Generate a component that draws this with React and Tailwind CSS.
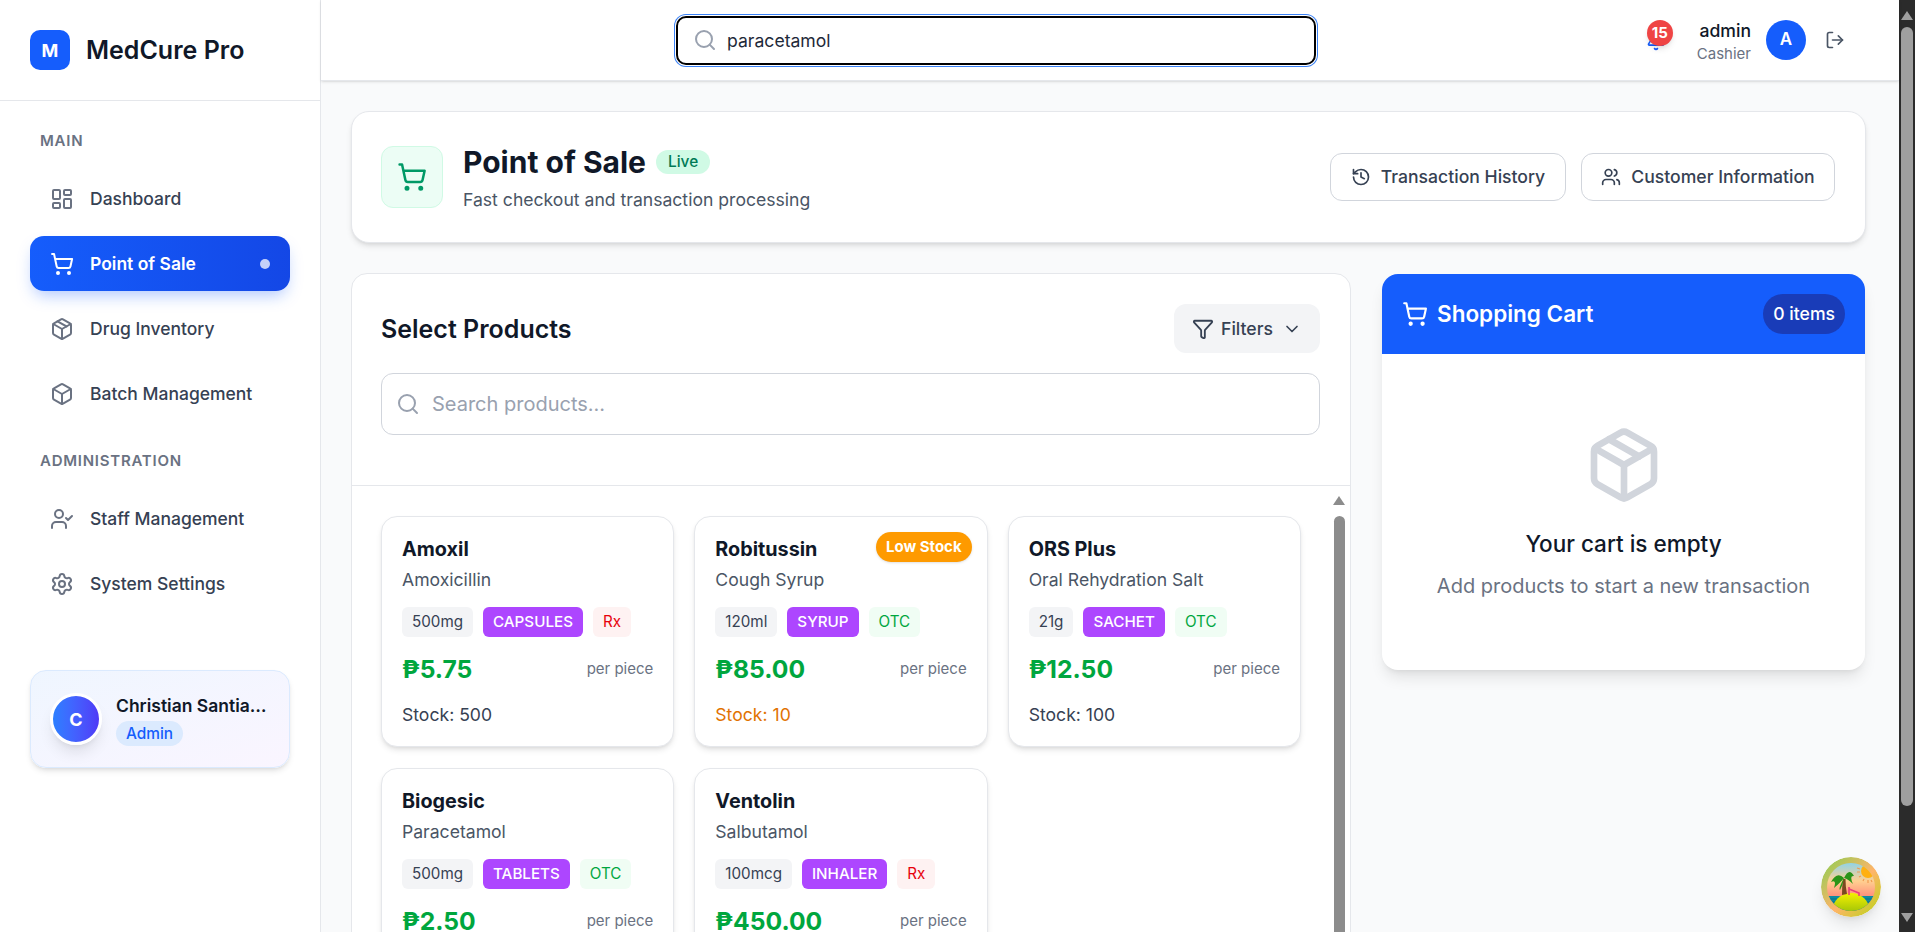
import React from 'react';
import {
    LayoutDashboard,
    ShoppingCart,
    Package,
    Box,
    UserCheck,
    Settings,
    Search,
    Bell,
    LogOut,
    History,
    Users,
    Filter,
    ChevronDown,
} from 'lucide-react';

const products = [
    { name: 'Amoxil', generic: 'Amoxicillin', dose: '500mg', form: 'CAPSULES', rx: true, price: '₱5.75', stock: 500 },
    { name: 'Robitussin', generic: 'Cough Syrup', dose: '120ml', form: 'SYRUP', rx: false, price: '₱85.00', stock: 10, low: true },
    { name: 'ORS Plus', generic: 'Oral Rehydration Salt', dose: '21g', form: 'SACHET', rx: false, price: '₱12.50', stock: 100 },
    { name: 'Biogesic', generic: 'Paracetamol', dose: '500mg', form: 'TABLETS', rx: false, price: '₱2.50', stock: 200 },
    { name: 'Ventolin', generic: 'Salbutamol', dose: '100mcg', form: 'INHALER', rx: true, price: '₱450.00', stock: 50 },
];

const NavItem = ({ icon: Icon, label, active }) => (
    <div
        className={`flex items-center h-[55px] pl-[20px] pr-[20px] rounded-[14px] text-[17.5px] ${active
            ? 'bg-gradient-to-r from-blue-600 to-blue-700 text-white font-semibold shadow-[0_8px_16px_-4px_rgba(21,93,252,0.35)]'
            : 'text-gray-700 font-medium'
            }`}
    >
        <Icon size={24} strokeWidth={2} className={active ? 'text-white' : 'text-gray-500'} />
        <span className="ml-[16px] pt-[2px]">{label}</span>
        {active && <span className="ml-auto w-[10px] h-[10px] rounded-full bg-white/75" />}
    </div>
);

const Sidebar = () => (
    <aside className="w-[321px] shrink-0 bg-white border-r border-gray-200 flex flex-col">
        <div className="h-[101px] shrink-0 border-b border-gray-200 flex items-center pl-[30px]">
            <div className="w-[40px] h-[40px] rounded-[10px] bg-blue-600 flex items-center justify-center text-white font-bold text-[18px]">
                M
            </div>
            <span className="ml-[16px] pt-[2px] text-[25px] font-semibold text-gray-900">MedCure Pro</span>
        </div>
        <div className="px-[30px] pt-[30px]">
            <div className="pl-[10px] text-[15px] leading-[20px] font-semibold tracking-wider text-gray-500">MAIN</div>
            <div className="mt-[20px] flex flex-col gap-[10px]">
                <NavItem icon={LayoutDashboard} label="Dashboard" />
                <NavItem icon={ShoppingCart} label="Point of Sale" active />
                <NavItem icon={Package} label="Drug Inventory" />
                <NavItem icon={Box} label="Batch Management" />
            </div>
            <div className="pl-[10px] mt-[30px] text-[15px] leading-[20px] font-semibold tracking-wider text-gray-500">ADMINISTRATION</div>
            <div className="mt-[20px] flex flex-col gap-[10px]">
                <NavItem icon={UserCheck} label="Staff Management" />
                <NavItem icon={Settings} label="System Settings" />
            </div>
            <div className="mt-[59px] h-[98px] rounded-[16px] border border-blue-100 bg-gradient-to-br from-blue-50 to-purple-50 shadow-md flex items-center pl-[19px] pr-[20px]">
                <div className="w-[52px] h-[52px] shrink-0 rounded-full border-[3px] border-white bg-gradient-to-r from-blue-500 to-indigo-600 shadow-lg flex items-center justify-center text-white font-bold text-[18px]">
                    C
                </div>
                <div className="ml-[14px] min-w-0">
                    <div className="truncate text-[17.5px] leading-[26px] font-semibold text-gray-900">Christian Santiago</div>
                    <span className="inline-block mt-[2px] px-[10px] rounded-full bg-blue-100 text-blue-600 text-[15.4px] leading-[25px] font-medium">Admin</span>
                </div>
            </div>
        </div>
    </aside>
);

const TopBar = () => (
    <header className="h-[81px] shrink-0 bg-white border-b border-gray-200 shadow-sm flex items-center pr-[54px]">
        <div className="ml-[355px] w-[640px] h-[49px] rounded-[10px] border-2 border-black bg-white shadow-[0_0_0_1px_#fff,0_0_0_2px_#3b82f6] flex items-center pl-[15px]">
            <Search size={24} className="text-gray-400" />
            <input readOnly value="paracetamol" className="ml-[10px] pt-[2px] flex-1 outline-none bg-transparent text-[17.6px] text-gray-800" style={{ fontFamily: 'inherit' }} />
        </div>
        <div className="ml-auto flex items-center">
            <div className="relative w-[20px] h-[20px] mt-[2px]">
                <Bell size={20} className="text-blue-600" />
                <span className="absolute -top-[11px] left-[1px] w-[26px] h-[26px] rounded-full bg-[#ef4444] shadow-md text-white text-[15px] font-bold flex items-center justify-center">15</span>
            </div>
            <div className="ml-[31px] pt-[2px] text-right">
                <div className="text-[17.6px] leading-[26px] font-medium text-gray-900">admin</div>
                <div className="text-[15px] leading-[20px] text-gray-500">Cashier</div>
            </div>
            <div className="ml-[15px] w-[40px] h-[40px] rounded-full bg-blue-600 flex items-center justify-center text-white font-semibold text-[17px]">A</div>
            <LogOut size={20} className="ml-[19px] text-gray-600" />
        </div>
    </header>
);

const Tag = ({ className, children }) => (
    <span className={`h-[30px] px-[10px] rounded-[6px] flex items-center text-[15.2px] ${className}`}>{children}</span>
);

const ProductCard = ({ product }) => (
    <div className="relative h-[231px] rounded-[16px] border border-gray-200 bg-white shadow-md pt-[18px] px-[20px]">
        {product.low && (
            <span className="absolute top-[15px] right-[15px] h-[30px] px-[10px] rounded-full bg-amber-500 shadow-sm text-white text-[15px] font-bold flex items-center">Low Stock</span>
        )}
        <div className="text-[19.8px] leading-[28px] font-bold text-gray-900">{product.name}</div>
        <div className="mt-[4px] pt-[1px] text-[17.6px] leading-[24px] text-gray-600">{product.generic}</div>
        <div className="mt-[15px] flex gap-[10px]">
            <Tag className="bg-gray-100 text-gray-700">{product.dose}</Tag>
            <Tag className="bg-purple-500 text-white font-medium">{product.form}</Tag>
            {product.rx
                ? <Tag className="bg-red-50 text-red-600">Rx</Tag>
                : <Tag className="bg-green-50 text-green-600">OTC</Tag>}
        </div>
        <div className="mt-[14px] flex items-center justify-between">
            <span className="text-[24.7px] leading-[36px] font-bold text-green-600">{product.price}</span>
            <span className="text-[15px] text-gray-500">per piece</span>
        </div>
        <div className={`mt-[16px] text-[17.6px] leading-[24px] ${product.low ? 'text-amber-600' : 'text-gray-700'}`}>
            Stock: {product.stock}
        </div>
    </div>
);

const ProductPanel = () => (
    <section className="rounded-t-[16px] border border-gray-200 bg-white flex flex-col h-[700px]">
        <div className="h-[212px] shrink-0 border-b border-gray-200 pl-[29px] pr-[30px] pt-[30px]">
            <div className="flex items-center justify-between">
                <h2 className="pt-[2px] text-[25px] font-semibold text-gray-900">Select Products</h2>
                <button className="w-[146px] h-[49px] rounded-[12px] bg-gray-100 flex items-center justify-center text-[17.6px] font-medium text-gray-700">
                    <Filter size={22} />
                    <span className="ml-[7px] pt-[2px]">Filters</span>
                    <ChevronDown size={20} className="ml-[9px]" />
                </button>
            </div>
            <div className="mt-[20px] h-[62px] rounded-[12px] border border-gray-300 flex items-center pl-[14px]">
                <Search size={24} className="text-gray-400" />
                <span className="ml-[12px] text-[20px] text-gray-400">Search products...</span>
            </div>
        </div>
        <div className="flex-1 flex min-h-0">
            <div className="flex-1 pl-[29px] pr-[30px] pt-[30px]">
                <div className="grid grid-cols-3 gap-x-[20px] gap-y-[21px]">
                    {products.map((p) => <ProductCard key={p.name} product={p} />)}
                </div>
            </div>
            {/* inner scrollbar */}
            <div className="w-[19px] shrink-0 flex flex-col items-center pt-[10px] pr-[3px]">
                <div className="w-0 h-0 border-x-[6px] border-x-transparent border-b-[9px] border-b-[#8c8c8c]" />
                <div className="mt-[11px] w-[11px] flex-1 rounded-full bg-[#8c8c8c]" />
            </div>
        </div>
    </section>
);

const CartPanel = () => (
    <section className="mt-[1px] rounded-[16px] bg-white shadow-lg h-[396px] overflow-hidden">
        <div className="h-[80px] bg-blue-600 flex items-center justify-between pl-[20px] pr-[20px] text-white">
            <div className="flex items-center">
                <ShoppingCart size={26} />
                <span className="ml-[9px] text-[22.5px] font-semibold">Shopping Cart</span>
            </div>
            <span className="h-[40px] px-[10px] rounded-full bg-blue-800 flex items-center text-[17.6px] font-medium">0 items</span>
        </div>
        <div className="flex flex-col items-center pt-[71px]">
            <Package size={80} className="text-gray-300" />
            <div className="mt-[24px] text-[22.5px] leading-[30px] font-medium text-gray-900">Your cart is empty</div>
            <div className="mt-[13px] text-[20px] leading-[28px] text-gray-500">Add products to start a new transaction</div>
        </div>
    </section>
);

const BeachBadge = () => (
    <svg viewBox="0 0 60 60" className="absolute right-[18px] bottom-[15px] w-[60px] h-[60px] rounded-full shadow-lg">
        <defs>
            <linearGradient id="ring" x1="0" y1="0" x2="1" y2="1">
                <stop offset="0" stopColor="#86d052" />
                <stop offset="0.55" stopColor="#ffb46a" />
                <stop offset="1" stopColor="#b4d810" />
            </linearGradient>
            <linearGradient id="sky" x1="0" y1="0" x2="0" y2="1">
                <stop offset="0.05" stopColor="#7fd4f5" />
                <stop offset="0.4" stopColor="#ffd090" />
                <stop offset="0.7" stopColor="#ff8478" />
            </linearGradient>
            <linearGradient id="isle" x1="0" y1="0" x2="0" y2="1">
                <stop offset="0" stopColor="#f5f000" />
                <stop offset="1" stopColor="#4f9a10" />
            </linearGradient>
            <clipPath id="inner"><circle cx="30" cy="30" r="24" /></clipPath>
        </defs>
        <circle cx="30" cy="30" r="30" fill="url(#ring)" />
        <g clipPath="url(#inner)">
            <rect width="60" height="60" fill="url(#sky)" />
            <circle cx="47" cy="14" r="7" fill="#ffb010" />
            <path d="M36 11l3 1M36 15l3 0M38 20l2-1M42 24l1-2M47 26l0-3M51 25l-1-2" stroke="#f09a50" strokeWidth="1.2" />
            <rect y="39" width="60" height="21" fill="#0f8aa0" />
            <path d="M0 42h60M0 45h60" stroke="#0b5f78" strokeWidth="0.6" />
            <ellipse cx="30" cy="55" rx="19" ry="19" fill="url(#isle)" />
            <path d="M21 38Q21 29 22 22L24.5 22Q24.5 30 26 37Z" fill="#7a4a20" />
            <path d="M23 21Q16 14 10 25Q16 22 13 31Q20 25 23 21ZM23 21Q17 32 19 33Q22 28 23 21ZM23 21Q28 10 33 19Q28 18 32 27Q27 22 23 21Z" fill="#2a9418" />
            <path d="M28 30v8M28 32l10 4v3" stroke="#e8407a" strokeWidth="1.6" fill="none" />
        </g>
    </svg>
);

const App = () => (
    <div className="relative h-screen flex overflow-hidden bg-white" style={{ fontFamily: 'Inter, "Noto Sans", sans-serif' }}>
        <Sidebar />
        <main className="relative flex-1 min-w-0 flex flex-col bg-gray-50">
            <TopBar />
            <div className="pl-[30px] pr-[33px] pt-[30px]">
                <div className="h-[132px] rounded-[18px] border border-gray-200 bg-white shadow-md flex items-center pl-[29px] pr-[30px]">
                    <div className="w-[62px] h-[62px] rounded-[12px] border border-emerald-100 bg-emerald-50 flex items-center justify-center">
                        <ShoppingCart size={30} className="text-emerald-600" />
                    </div>
                    <div className="ml-[20px] pt-[2px]">
                        <div className="flex items-center">
                            <h1 className="text-[30px] leading-[36px] font-bold text-gray-900">Point of Sale</h1>
                            <span className="ml-[10px] h-[24px] px-[12px] rounded-full bg-emerald-100 text-emerald-700 text-[15.4px] font-medium flex items-center">Live</span>
                        </div>
                        <p className="mt-[8px] text-[17.6px] leading-[24px] text-gray-600">Fast checkout and transaction processing</p>
                    </div>
                    <div className="ml-auto flex gap-[15px]">
                        <button className="h-[48px] w-[236px] rounded-[12px] border border-gray-300 flex items-center justify-center text-[17.6px] font-medium text-gray-700">
                            <History size={20} />
                            <span className="ml-[10px]">Transaction History</span>
                        </button>
                        <button className="h-[48px] w-[254px] rounded-[12px] border border-gray-300 flex items-center justify-center text-[17.6px] font-medium text-gray-700">
                            <Users size={20} />
                            <span className="ml-[10px]">Customer Information</span>
                        </button>
                    </div>
                </div>
                <div className="mt-[30px] grid grid-cols-[1000px_483px] gap-x-[31px] items-start">
                    <ProductPanel />
                    <CartPanel />
                </div>
            </div>
            <BeachBadge />
        </main>
        {/* page scrollbar */}
        <div className="w-[16px] shrink-0 bg-[#2b2b2b] flex flex-col items-center pt-[11px] pb-[10px]">
            <div className="w-0 h-0 border-x-[6px] border-x-transparent border-b-[9px] border-b-[#9f9f9f]" />
            <div className="mt-[7px] w-[12px] h-[779px] rounded-full bg-[#9f9f9f]" />
            <div className="mt-auto w-0 h-0 border-x-[6px] border-x-transparent border-t-[9px] border-t-[#9f9f9f]" />
        </div>
    </div>
);

export default App;
